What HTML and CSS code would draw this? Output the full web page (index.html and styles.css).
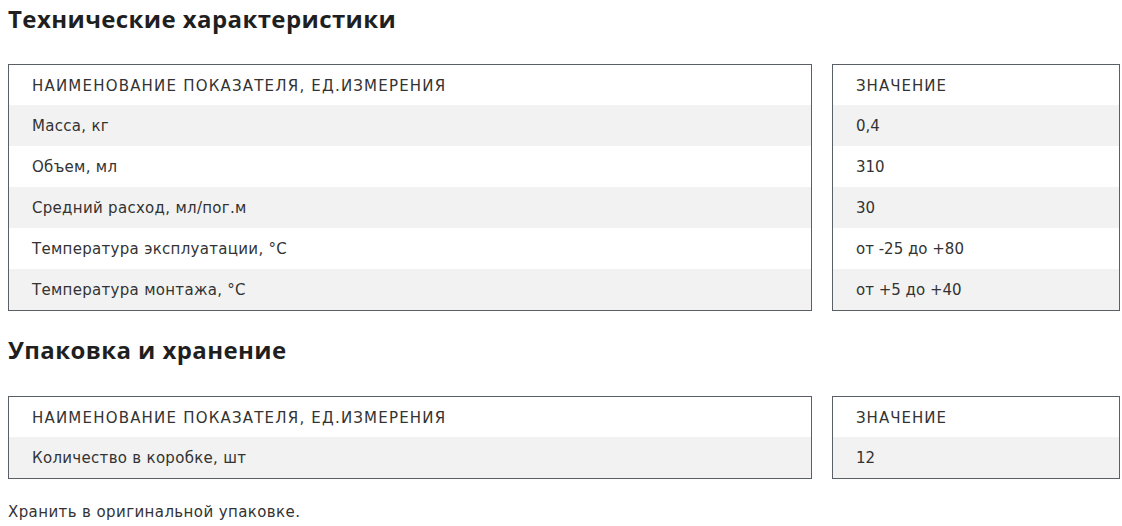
FILE: index.html
```html
<!DOCTYPE html>
<html lang="ru">
<head>
<meta charset="utf-8">
<link rel="stylesheet" href="styles.css">
</head>
<body>
<section class="block block-first">
  <h2 class="title">Технические характеристики</h2>
  <div class="tables">
    <div class="table table-name">
      <div class="row head">НАИМЕНОВАНИЕ ПОКАЗАТЕЛЯ, ЕД.ИЗМЕРЕНИЯ</div>
      <div class="row">Масса, кг</div>
      <div class="row">Объем, мл</div>
      <div class="row">Средний расход, мл/пог.м</div>
      <div class="row">Температура эксплуатации, °С</div>
      <div class="row">Температура монтажа, °С</div>
    </div>
    <div class="table table-value">
      <div class="row head">ЗНАЧЕНИЕ</div>
      <div class="row">0,4</div>
      <div class="row">310</div>
      <div class="row">30</div>
      <div class="row">от -25 до +80</div>
      <div class="row">от +5 до +40</div>
    </div>
  </div>
</section>
<section class="block block-second">
  <h2 class="title">Упаковка и хранение</h2>
  <div class="tables">
    <div class="table table-name">
      <div class="row head">НАИМЕНОВАНИЕ ПОКАЗАТЕЛЯ, ЕД.ИЗМЕРЕНИЯ</div>
      <div class="row">Количество в коробке, шт</div>
    </div>
    <div class="table table-value">
      <div class="row head">ЗНАЧЕНИЕ</div>
      <div class="row">12</div>
    </div>
  </div>
  <p class="note">Хранить в оригинальной упаковке.</p>
</section>
</body>
</html>
```

FILE: styles.css
```css
html, body {
  margin: 0;
  padding: 0;
  background: #ffffff;
}
body {
  padding: 0 8px;
  font-family: "DejaVu Sans", "Open Sans", sans-serif;
  color: #222222;
  width: 1112px;
}
.title {
  margin: 0;
  font-family: "Open Sans", sans-serif;
  font-size: 24px;
  line-height: 30px;
  font-weight: 700;
  letter-spacing: 0.4px;
  color: #1f1f1f;
}
.block-first {
  padding-top: 4px;
}
.block-first .title {
  margin-bottom: 30px;
}
.block-second {
  margin-top: 24px;
}
.block-second .title {
  margin-bottom: 31px;
}
.tables {
  display: flex;
  gap: 20px;
  align-items: flex-start;
}
.table {
  border: 1px solid #5a5f66;
  display: flex;
  flex-direction: column;
}
.table-name {
  width: 804px;
  box-sizing: border-box;
}
.table-value {
  width: 288px;
  box-sizing: border-box;
}
.row {
  height: 41px;
  box-sizing: border-box;
  display: flex;
  align-items: center;
  padding: 1px 0 0 23px;
  font-size: 15px;
  line-height: 20px;
  letter-spacing: 0.3px;
  color: #333333;
}
.row.head {
  height: 40px;
  letter-spacing: 1.2px;
}
.table-value .row {
  letter-spacing: 0;
}
.table-value .row.head {
  letter-spacing: 1px;
}
.row:nth-child(even) {
  background: #f2f2f2;
}
.note {
  margin: 23px 0 0;
  font-size: 15px;
  line-height: 20px;
  letter-spacing: 0.4px;
  color: #333333;
}
```
